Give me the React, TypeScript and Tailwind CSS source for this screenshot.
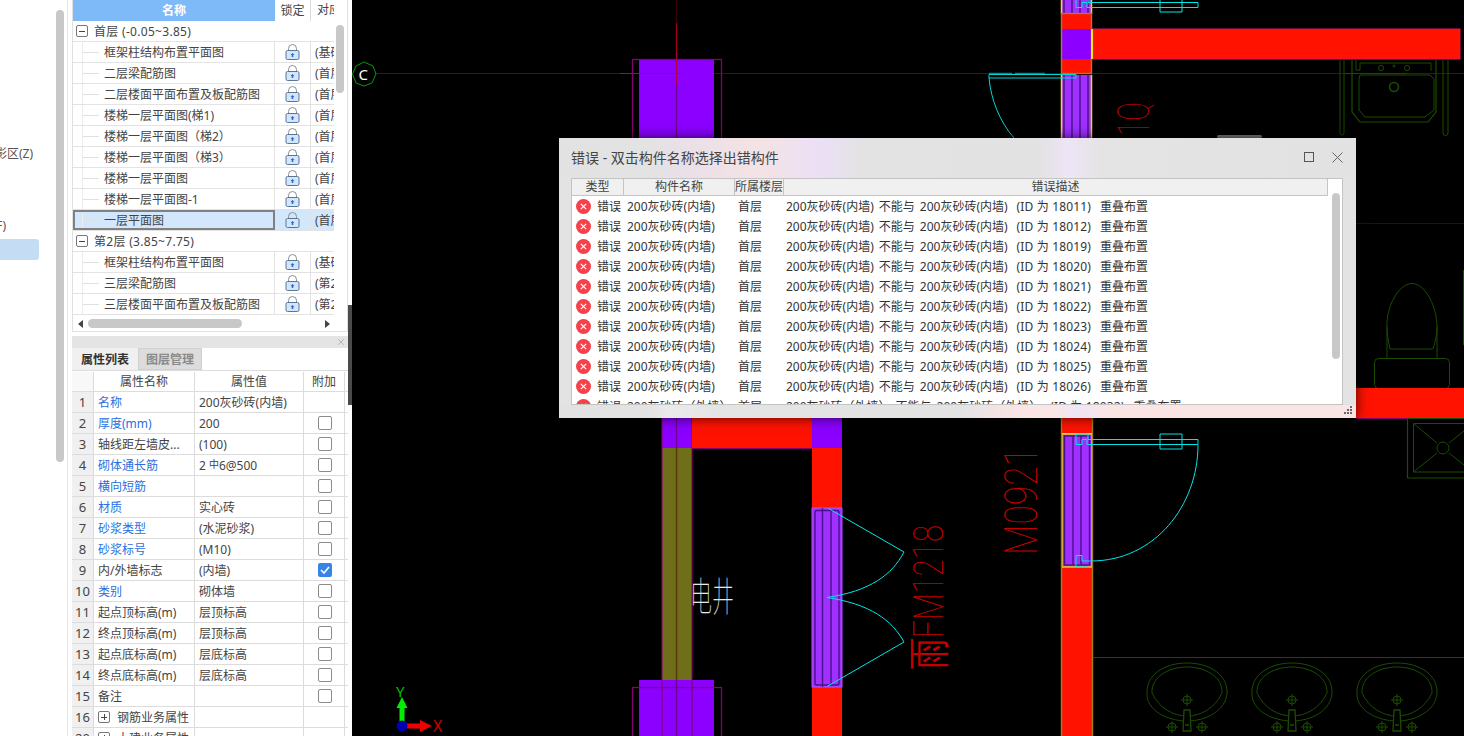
import React from 'react';
import { X } from 'lucide-react';

const treeGroups = [
  {
    title: '首层 (-0.05~3.85)',
    rows: [
      ['框架柱结构布置平面图', '(基础层)'],
      ['二层梁配筋图', '(首层)'],
      ['二层楼面平面布置及板配筋图', '(首层)'],
      ['楼梯一层平面图(梯1)', '(首层)'],
      ['楼梯一层平面图（梯2）', '(首层)'],
      ['楼梯一层平面图（梯3）', '(首层)'],
      ['楼梯一层平面图', '(首层)'],
      ['楼梯一层平面图-1', '(首层)'],
      ['一层平面图', '(首层)'],
    ],
  },
  {
    title: '第2层 (3.85~7.75)',
    rows: [
      ['框架柱结构布置平面图', '(基础层)'],
      ['三层梁配筋图', '(第2层)'],
      ['三层楼面平面布置及板配筋图', '(第2层)'],
    ],
  },
];

const props = [
  { name: '名称', value: '200灰砂砖(内墙)', blue: true, noCheck: true },
  { name: '厚度(mm)', value: '200', blue: true },
  { name: '轴线距左墙皮...', value: '(100)' },
  { name: '砌体通长筋', value: '2 中6@500', blue: true },
  { name: '横向短筋', value: '', blue: true },
  { name: '材质', value: '实心砖', blue: true },
  { name: '砂浆类型', value: '(水泥砂浆)', blue: true },
  { name: '砂浆标号', value: '(M10)', blue: true },
  { name: '内/外墙标志', value: '(内墙)', checked: true },
  { name: '类别', value: '砌体墙', blue: true },
  { name: '起点顶标高(m)', value: '层顶标高' },
  { name: '终点顶标高(m)', value: '层顶标高' },
  { name: '起点底标高(m)', value: '层底标高' },
  { name: '终点底标高(m)', value: '层底标高' },
  { name: '备注', value: '' },
];

const errorIds = ['18011', '18012', '18019', '18020', '18021', '18022', '18023', '18024', '18025', '18026'];

function LockIcon() {
  return (
    <svg width="15" height="16" viewBox="0 0 15 16" fill="none">
      <path d="M3.5 7V4.5a4 4 0 0 1 8 0V7" stroke="#8a8f96" strokeWidth="1" />
      <rect x="1" y="6.5" width="13" height="9" rx="1.5" fill="#d6e6fa" stroke="#5b7596" />
      <path d="M7.5 9l2 2H8.3v2H6.7v-2H5.5z" fill="#1f6fe0" />
    </svg>
  );
}

function ExpandBox({ plus }: { plus?: boolean }) {
  return (
    <span className="relative flex h-[12px] w-[12px] shrink-0 items-center justify-center rounded-[2px] border border-[#777] bg-white">
      <span className="h-px w-[6px] bg-[#444]" />
      {plus && <span className="absolute h-[6px] w-px bg-[#444]" />}
    </span>
  );
}

function TreePanel() {
  return (
    <div className="flex h-[332px] flex-col border-x border-b border-[#e0e0e0]">
      <div className="flex h-[316px]">
        <div className="h-full w-[261px] overflow-hidden">
          <div className="flex h-[21px] text-[#444]">
            <div className="flex w-[202px] items-center justify-center bg-[#7fbaf8] font-bold text-white">名称</div>
            <div className="flex w-[36px] items-center justify-center border-r border-[#dcdcdc]">锁定</div>
            <div className="w-[23px] overflow-hidden whitespace-nowrap pl-[6px] leading-[19px]">对应层</div>
          </div>
          {treeGroups.map((group) => (
            <div key={group.title}>
              <div className="flex h-[21px] items-center gap-[6px] border-b border-[#e3e3e3] pl-[3px] text-[#444]">
                <ExpandBox />
                <span className="pt-[2px] tracking-[0.3px]">{group.title}</span>
              </div>
              {group.rows.map(([name, ref]) => {
                const selected = name === '一层平面图';
                return (
                  <div key={name} className={`flex h-[21px] border-b border-[#e3e3e3] text-[#444] ${selected ? 'bg-[#d2e7fc]' : ''}`}>
                    <div className={`flex w-[202px] items-center border-[#808080] ${selected ? 'border-2' : 'border-r border-r-[#e3e3e3]'}`}>
                      <span className={`flex h-full w-[22px] items-center border-l border-[#ececec] ${selected ? 'ml-[7px]' : 'ml-[9px]'}`}>
                        <span className="h-px w-[16px] bg-[#e0e0e0]" />
                      </span>
                      <span className="whitespace-nowrap pt-[2px]">{name}</span>
                    </div>
                    <div className="flex w-[36px] items-center justify-center border-r border-[#e3e3e3]">
                      <LockIcon />
                    </div>
                    <div className="w-[23px] overflow-hidden whitespace-nowrap pl-[4px] leading-[22px]">{ref}</div>
                  </div>
                );
              })}
            </div>
          ))}
        </div>
        <div className="ml-[2px] pt-[25px]">
          <div className="h-[68px] w-[8px] rounded-full bg-[#c8c8c8]" />
        </div>
      </div>
      <div className="flex h-[15px] w-[261px] items-center pl-[5px]">
        <span className="h-0 w-0 border-y-[4px] border-r-[5px] border-y-transparent border-r-[#444]" />
        <span className="ml-[5px] h-[9px] w-[154px] rounded-full bg-[#c8c8c8]" />
        <span className="ml-[83px] h-0 w-0 border-y-[4px] border-l-[5px] border-y-transparent border-l-[#444]" />
      </div>
    </div>
  );
}

function Checkbox({ checked }: { checked?: boolean }) {
  if (checked) {
    return (
      <span className="flex h-[14px] w-[14px] items-center justify-center rounded-[2px] bg-[#3584e8]">
        <svg width="10" height="8" viewBox="0 0 10 8" fill="none">
          <path d="M1 4l3 3 5-6" stroke="#fff" strokeWidth="1.6" />
        </svg>
      </span>
    );
  }
  return <span className="h-[14px] w-[14px] rounded-[2px] border border-[#8c8c8c] bg-white" />;
}

function PropRow({ index, name, value, blue, checked, noCheck, group }: {
  index: number; name: string; value?: string; blue?: boolean; checked?: boolean; noCheck?: boolean; group?: boolean;
}) {
  return (
    <div className="flex h-[21px] shrink-0 border-b border-[#dcdcdc]">
      <div className="flex w-[22px] items-center justify-center border-r border-[#dcdcdc] bg-[#f0f0f0] pt-[1px] text-[13px] text-[#444]">{index}</div>
      <div className={`flex w-[101px] items-center gap-[7px] whitespace-nowrap border-r border-[#dcdcdc] pl-[4px] ${blue ? 'text-[#2a6fe0]' : 'text-[#444]'}`}>
        {group && <ExpandBox plus />}
        <span className="pt-[2px]">{name}</span>
      </div>
      <div className="flex w-[109px] items-center whitespace-nowrap border-r border-[#dcdcdc] pl-[4px] pt-[2px] text-[#444]">
        {value === '2 中6@500' ? (
          <>
            <span className="mr-[3px]">2</span>
            <span className="pb-[3px] text-[10px]">中</span>
            <span>6@500</span>
          </>
        ) : (
          value
        )}
      </div>
      <div className="flex w-[41px] items-center justify-center border-r border-[#dcdcdc] pl-[1px]">
        {!noCheck && !group && <Checkbox checked={checked} />}
      </div>
    </div>
  );
}

function PropertyPanel() {
  return (
    <div className="mt-[4px] flex h-[400px] flex-col overflow-hidden">
      <div className="flex h-[12px] shrink-0 items-center justify-end bg-[#e4e4e4] pr-[2px]">
        <X size={10} color="#999" strokeWidth={1.5} />
      </div>
      <div className="flex h-[23px] shrink-0 border-b border-[#dcdcdc]">
        <div className="flex w-[66px] items-center justify-center bg-[#f0f0f0] pt-[1px] font-bold text-[#333]">属性列表</div>
        <div className="flex w-[64px] items-center justify-center border border-[#d0d0d0] bg-[#dcdcdc] pt-[1px] font-bold text-[#8a8a8a]">图层管理</div>
      </div>
      <div className="flex h-[21px] shrink-0 border-b border-[#dcdcdc] pt-[1px] text-[#444]">
        <div className="w-[22px] border-r border-[#dcdcdc] bg-[#f8f8f8]" />
        <div className="flex w-[101px] items-center justify-center border-r border-[#dcdcdc]">属性名称</div>
        <div className="flex w-[109px] items-center justify-center border-r border-[#dcdcdc]">属性值</div>
        <div className="flex w-[41px] items-center justify-center border-r border-[#dcdcdc]">附加</div>
      </div>
      {props.map((p, i) => (
        <PropRow key={p.name} index={i + 1} {...p} />
      ))}
      <PropRow index={16} name="钢筋业务属性" group />
      <PropRow index={20} name="土建业务属性" group />
    </div>
  );
}

function Sidebar() {
  return (
    <aside className="flex w-[352px] shrink-0 bg-white">
      <div className="relative w-[68px] shrink-0 overflow-hidden border-r border-[#e6e6e6] text-[#555]">
        <div className="absolute left-[56px] top-[10px] h-[452px] w-[8px] rounded-full bg-[#c8c8c8]" />
        <div className="-ml-[5px] mt-[145px] h-[18px] leading-[18px]">影区(Z)</div>
        <div className="-ml-[4px] mt-[54px] h-[18px] leading-[18px]">F)</div>
        <div className="mt-[4px] h-[21px] w-[39px] rounded-r-[3px] bg-[#c5dcf5]" />
      </div>
      <div className="ml-[4px] w-[276px] shrink-0">
        <TreePanel />
        <PropertyPanel />
      </div>
      <div className="mt-[305px] h-[100px] w-[4px] bg-[#4a4a4a]" />
    </aside>
  );
}

function ErrorIcon() {
  return (
    <svg width="15" height="15" viewBox="0 0 15 15" className="shrink-0">
      <circle cx="7.5" cy="7.5" r="7.5" fill="#f4414a" />
      <path d="M4.8 4.8l5.4 5.4M10.2 4.8l-5.4 5.4" stroke="#fff" strokeWidth="1.2" />
    </svg>
  );
}

function ErrorRow({ id, wall }: { id: string; wall: string }) {
  return (
    <div className="flex h-[20px] shrink-0 items-center whitespace-pre text-[#333]">
      <div className="flex w-[52px] items-center gap-[6px] pl-[4px]">
        <ErrorIcon />
        <span className="pt-[2px]">错误</span>
      </div>
      <div className="w-[111px] pl-[3px] pt-[2px]">{wall}</div>
      <div className="w-[49px] pl-[3px] pt-[2px]">首层</div>
      <div className="flex pl-[2px] pt-[2px]">
        <span>{wall}</span>
        <span className="ml-[5px]">不能与</span>
        <span className="ml-[5px]">{wall}</span>
        <span className="ml-[9px] tracking-[0.15px]">{`(ID 为 ${id})`}</span>
        <span className="ml-[9px]">重叠布置</span>
      </div>
    </div>
  );
}

function ErrorDialog() {
  return (
    <div className="absolute left-[207px] top-[138px] flex h-[280px] w-[797px] flex-col bg-[#e3e3e3] shadow-[0_0_12px_rgba(0,0,0,0.7)]">
      <div className="flex h-[40px] shrink-0 items-center justify-between bg-[linear-gradient(90deg,#e2e2e2_0%,#e3e3e3_11%,#e9e0e8_16%,#f4e3e4_25%,#ebdff6_33%,#e3e3e3_38%,#e2e2e2_60%,#eee4f6_64%,#e4e4e4_68%,#e2e2e2_100%)] pb-[2px] pl-[12px] pr-[13px]">
        <span className="text-[14px] text-[#444]">错误 - 双击构件名称选择出错构件</span>
        <div className="flex items-center gap-[18px]">
          <span className="h-[10px] w-[10px] border border-[#555]" />
          <svg width="11" height="11" viewBox="0 0 11 11" fill="none">
            <path d="M0.5 0.5l10 10M10.5 0.5l-10 10" stroke="#666" />
          </svg>
        </div>
      </div>
      <div className="relative mx-[12px] flex h-[227px] w-[772px] shrink-0 flex-col overflow-hidden border border-[#c4c4c4] bg-white">
        <div className="flex h-[17px] w-[756px] shrink-0 border-b border-[#c4c4c4] bg-[#f0f0f0] text-[#444]">
          <div className="flex w-[52px] items-center justify-center border-r border-[#c4c4c4]">类型</div>
          <div className="flex w-[111px] items-center justify-center border-r border-[#c4c4c4]">构件名称</div>
          <div className="flex w-[49px] items-center justify-center border-r border-[#c4c4c4]">所属楼层</div>
          <div className="flex flex-1 items-center justify-center border-r border-[#c4c4c4]">错误描述</div>
        </div>
        {errorIds.map((id) => (
          <ErrorRow key={id} id={id} wall="200灰砂砖(内墙)" />
        ))}
        <ErrorRow id="18032" wall="200灰砂砖（外墙）" />
        <div className="absolute left-[760px] top-[14px] h-[166px] w-[8px] rounded-full bg-[#c8c8c8]" />
      </div>
      <div className="relative flex-1 bg-[linear-gradient(90deg,#e2e2e2_0%,#e3e3e3_11%,#ecebec_14%,#e4e4e4_20%,#e3e3e3_50%,#fae5e4_58%,#fae6e6_62%,#eee6f6_65%,#fbe4e4_69%,#fbe4e4_100%)]">
        <svg width="8" height="8" viewBox="0 0 8 8" className="absolute bottom-[4px] right-[4px]">
          <path d="M6 0h2v2H6zM3 3h2v2H3zM6 3h2v2H6zM0 6h2v2H0zM3 6h2v2H3zM6 6h2v2H6z" fill="#666" />
        </svg>
      </div>
    </div>
  );
}

const GREEN = '#1b4d00';

function Basin({ cx }: { cx: number }) {
  const bolt = (x: number, y: number, r: number) => (
    <g stroke={GREEN} fill="none">
      <circle cx={x} cy={y} r={r} />
      <path d={`M${x - r - 2} ${y}H${x + r + 2}M${x} ${y - r - 2}V${y + r + 2}`} />
    </g>
  );
  return (
    <g>
      <path d={`M${cx} 663C${cx + 24} 663 ${cx + 41} 676 ${cx + 40} 693C${cx + 39} 710 ${cx + 20} 721 ${cx} 721C${cx - 20} 721 ${cx - 41} 710 ${cx - 40} 693C${cx - 41} 676 ${cx - 24} 663 ${cx} 663Z`} fill="none" stroke={GREEN} />
      <path d={`M${cx} 667C${cx + 20} 667 ${cx + 36} 678 ${cx + 35} 693C${cx + 28} 708 ${cx + 14} 716 ${cx} 716C${cx - 14} 716 ${cx - 28} 708 ${cx - 35} 693C${cx - 36} 678 ${cx - 20} 667 ${cx} 667Z`} fill="none" stroke={GREEN} />
      {bolt(cx, 700, 4)}
      {bolt(cx - 15, 727, 4)}
      {bolt(cx + 15, 727, 4)}
      <path d={`M${cx - 4} 731L${cx - 3} 710H${cx + 3}L${cx + 4} 731ZM${cx - 2} 725H${cx + 2}`} fill="#000" stroke={GREEN} strokeWidth="1.3" />
    </g>
  );
}

function DoorHinge({ dy }: { dy: number }) {
  return (
    <g transform={`translate(0 ${dy})`} fill="none" stroke="#00e6e6">
      <path d="M1076 434H1088V439.5H1198V444.5H1087V439.5H1082V444.5H1076Z" />
      <path d="M1160 434H1182V449H1160Z" />
    </g>
  );
}

function WindowBlock({ x, y, h }: { x: number; y: number; h: number }) {
  return (
    <g>
      <rect x={x} y={y} width="30" height={h} fill="#9f30ff" />
      <path d={`M${x + 0.5} ${y}V${y + h}M${x + 30.5} ${y}V${y + h}`} stroke="#f0e000" strokeWidth="1.5" />
      <path d={`M${x + 3} ${y}V${y + h}M${x + 11} ${y}V${y + h}M${x + 19} ${y}V${y + h}M${x + 27} ${y}V${y + h}`} stroke="#4c1088" strokeWidth="1.4" />
    </g>
  );
}

function CadDrawing() {
  const red = '#ff1200';
  const purple = '#8b00ff';
  const edge = '#86006e';
  const thin = { fontFamily: "Roboto, Lato, 'Noto Sans', sans-serif", fontWeight: 100 };
  return (
    <svg className="absolute inset-0 h-full w-full" viewBox="352 0 1112 736">
      {/* grid line and axis bubble */}
      <path d="M375 73.5H1464" stroke="#6a0008" />
      <polygon points="364,62 373,66 376,74 372,83 364,86 356,83 352.5,74 356,66" fill="#000" stroke="#0a9a0a" />
      <text x="358.5" y="79.5" fill="#fff" fontSize="15" fontFamily="'Noto Sans', sans-serif">C</text>

      {/* left column */}
      <rect x="639" y="59" width="75" height="90" fill={purple} />
      <rect x="632.5" y="59.5" width="89" height="90" fill="none" stroke={edge} strokeWidth="1.3" />
      <path d="M620 73.5H683" stroke="#c00030" strokeWidth="1.2" />
      <path d="M676.5 0V23" stroke="#3a0008" />
      <path d="M676.5 23V53" stroke="#a00018" strokeWidth="1.2" />
      <path d="M676.5 53V85" stroke="#b00040" strokeWidth="1.2" />
      <path d="M676.5 85V140" stroke="#6a0088" strokeWidth="1.2" />

      <rect x="662" y="418" width="30" height="30" fill={purple} />
      <rect x="662" y="448" width="30" height="232" fill="#6f6f1a" />
      <rect x="639" y="680" width="75" height="56" fill={purple} />
      <rect x="632.5" y="687.5" width="89" height="60" fill="none" stroke={edge} strokeWidth="1.3" />
      <path d="M662 418V736M692 418V736" stroke={edge} strokeWidth="1.2" />
      <path d="M676.5 418V448M676.5 680V736" stroke="#6a0088" strokeWidth="1.2" />
      <path d="M676.5 448V680" stroke="#5a3808" strokeWidth="1.5" />

      {/* beam and middle wall */}
      <rect x="692" y="418" width="120" height="30" fill={red} />
      <path d="M692 448.5H812" stroke={edge} />
      <rect x="812" y="418" width="30" height="30" fill={purple} />
      <rect x="812" y="448" width="30" height="60" fill={red} />
      <rect x="812" y="687" width="30" height="49" fill={red} />
      <rect x="812" y="508" width="30" height="179" fill="#9f30ff" stroke="#b050ff" />
      <rect x="815" y="510.5" width="24" height="174.5" rx="2" fill="none" stroke="#4c1088" strokeWidth="1.4" />
      <path d="M822.5 508V687M831 510V685" stroke="#4c1088" strokeWidth="1.4" />
      <path d="M828.5 508.5L904 552C892 575 870 591 827 597.5C870 604 892 620 904 642L827 686.5" fill="none" stroke="#00e6e6" />

      <g transform="translate(690 611) scale(1 1.8)">
        <text fill="#e8e8e8" fontSize="22" fontWeight="100" fontFamily="'Noto Sans CJK SC', sans-serif">电井</text>
      </g>

      {/* right wall */}
      <WindowBlock x={1061} y={0} h={14} />
      <rect x="1062" y="14" width="29" height="15" fill={red} />
      <rect x="1062" y="29" width="29" height="30" fill={purple} />
      <rect x="1062" y="59" width="29" height="14" fill={red} />
      <rect x="1061.5" y="13.5" width="30" height="60" fill="none" stroke="#a88020" strokeWidth="1.4" />
      <rect x="1092" y="29" width="368" height="30" fill={red} stroke="#e0106a" />
      <path d="M1092 29V59" stroke="#f4e000" strokeWidth="2" />
      <WindowBlock x={1061} y={75} h={65} />
      <DoorHinge dy={-437} />

      <path d="M989 73.5H1012M1015 73.5H1045" stroke="#0a8a8a" strokeWidth="1.3" />
      <path d="M989 74.5H1076V78H989ZM989 78C991 100 1000 122 1014 138" fill="none" stroke="#00d8d8" />
      <rect x="1217" y="135" width="45" height="3" rx="1.5" fill="#777" />

      <rect x="1062" y="418" width="30" height="16" fill={red} />
      <rect x="1062" y="434" width="30" height="133" fill="#9f30ff" stroke="#f0e000" strokeWidth="1.4" />
      <rect x="1064.5" y="436" width="25" height="129" fill="none" stroke="#4c1088" strokeWidth="1.4" />
      <path d="M1073 436V565M1081 436V565" stroke="#4c1088" strokeWidth="1.4" />
      <rect x="1062" y="568" width="30" height="168" fill={red} />
      <path d="M1061.5 418V736M1092.5 418V736" stroke="#a08020" strokeWidth="1.4" />
      <path d="M1062 567.5H1092" stroke="#e8a000" />
      <path d="M1062 433.5H1092" stroke="#f0e000" />
      <DoorHinge dy={0} />
      <path d="M1198 445C1198 505 1155 561 1091 561H1082V555.5H1076V567H1088" fill="none" stroke="#00e6e6" />

      {/* room labels */}
      <text transform="translate(1037 555) rotate(-90)" fill="#c40000" fontSize="46" textLength="108" lengthAdjust="spacingAndGlyphs" style={thin}>M0921</text>
      <text transform="translate(943 669) rotate(-90)" fill="#c40000" fontSize="42" textLength="144" lengthAdjust="spacingAndGlyphs" style={thin}>雨FM1218</text>
      <text transform="translate(1149 136) rotate(-90)" fill="#b80000" fontSize="44" textLength="34" lengthAdjust="spacingAndGlyphs" style={thin}>1Q</text>

      {/* washbasin */}
      <g fill="none" stroke={GREEN}>
        <path d="M1340 59V133a2 2 0 0 0 4 0V59M1443 59V133a2 2 0 0 0 5 0V59" />
        <path d="M1352 60V112L1360 122H1428L1436 112V60" strokeWidth="1.2" />
        <path d="M1356 60V70H1360V63H1431V70H1432" />
        <path d="M1360 75H1430L1434 79V110L1425 117H1365L1359 110V79Z" />
        <circle cx="1394" cy="87" r="4.5" strokeWidth="1.6" />
        <circle cx="1381" cy="68" r="2.5" />
        <circle cx="1407" cy="68" r="2.5" />
        <circle cx="1394" cy="66" r="1" />
      </g>
      <path d="M1344 73.5H1407" stroke="#a00018" strokeWidth="1.2" />

      {/* toilet */}
      <path d="M1356 223.5H1464" stroke="#4a0004" />
      <g fill="none" stroke={GREEN}>
        <rect x="1374.5" y="358.5" width="75" height="30" rx="4" />
        <path d="M1412 283.5C1398 283.5 1386 308 1387 327C1387 333 1388 340 1390 349H1433C1436 340 1437 333 1437 327C1437 308 1426 283.5 1412 283.5Z" />
        <path d="M1387 327V358M1437 327V358" />
      </g>
      <path d="M1463.5 270V345" stroke={GREEN} />
      <rect x="1356" y="388" width="108" height="30" fill={red} />
      <path d="M1356 418.5H1464" stroke={edge} />

      {/* floor drain */}
      <g fill="none" stroke={GREEN}>
        <path d="M1464 418.5H1407.5V478H1464" strokeWidth="1.2" />
        <path d="M1464 423.5H1413.5V472H1464" />
        <path d="M1413.5 423.5L1437 443M1413.5 472L1437 453M1449 443L1464 431M1449 453L1464 465" />
        <circle cx="1443" cy="448" r="6" />
      </g>

      <path d="M1093 657.5H1464" stroke={GREEN} />
      <Basin cx={1187} />
      <Basin cx={1292} />
      <Basin cx={1397} />

      {/* axis gizmo */}
      <path d="M399.5 722V708H396.5L402 697L407.5 708H404.5V722Z" fill="#00ee00" />
      <path d="M405 723.5H420V720L432 726L420 732V728.5H405Z" fill="#f00000" />
      <circle cx="402" cy="726" r="5.5" fill="#0000b0" />
      <text x="396" y="696.5" fill="#00c000" fontSize="15" fontFamily="'Noto Sans', sans-serif">Y</text>
      <text x="433" y="732" fill="#d00000" fontSize="16" fontFamily="'Noto Sans', sans-serif">X</text>
    </svg>
  );
}

export default function App() {
  return (
    <div className="flex h-[736px] w-[1464px] overflow-hidden bg-white text-[12px] [font-family:'Noto_Sans','Noto_Sans_CJK_SC',sans-serif]">
      <Sidebar />
      <main className="relative flex-1 bg-black">
        <CadDrawing />
        <ErrorDialog />
      </main>
    </div>
  );
}
